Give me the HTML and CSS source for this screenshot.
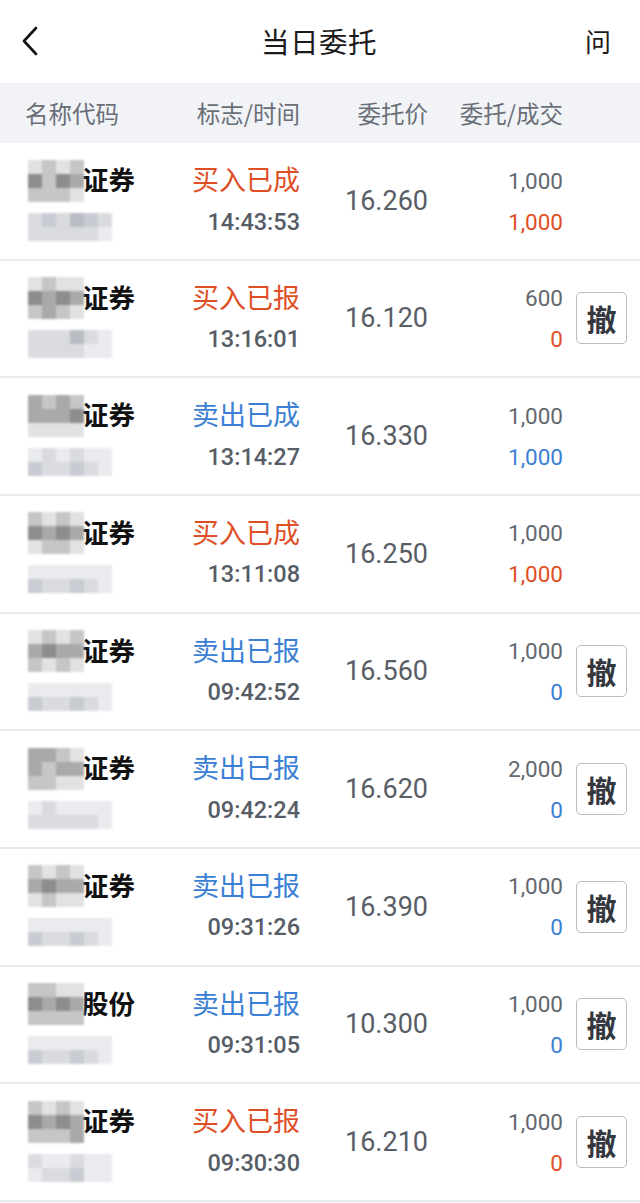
FILE: index.html
```html
<!DOCTYPE html>
<html lang="zh-CN">
<head>
<meta charset="utf-8">
<title>当日委托</title>
<link rel="stylesheet" href="styles.css">
</head>
<body>
<div class="app">
  <header class="topbar">
    <svg class="back" width="20" height="30" viewBox="0 0 20 30"><polyline points="16,2 4,15 16,28" fill="none" stroke="#111" stroke-width="2.6" stroke-linecap="round" stroke-linejoin="round"/></svg>
    <div class="title">当日委托</div>
    <div class="ask">问</div>
  </header>
  <div class="thead">
    <div class="c-name">名称代码</div>
    <div class="c-flag">标志/时间</div>
    <div class="c-price">委托价</div>
    <div class="c-qty">委托/成交</div>
    <div class="c-act"></div>
  </div>

  <div class="row">
    <div class="name"><div class="l1"><div class="mz mn"><i class="c4"></i><i class="c3"></i><i class="c4"></i><i class="c3"></i><i class="c1"></i><i class="c3"></i><i class="c1"></i><i class="c2"></i><i class="c3"></i><i class="c3"></i><i class="c3"></i><i class="c4"></i></div><span class="nm">证券</span></div><div class="l2"><div class="mz mc"><i class="b3"></i><i class="b2"></i><i class="b3"></i><i class="b1"></i><i class="b2"></i><i class="b3"></i><i class="b3"></i><i class="b3"></i><i class="b3"></i><i class="b3"></i><i class="b3"></i><i class="b4"></i></div></div></div>
    <div class="flag"><div class="st buy">买入已成</div><div class="tm">14:43:53</div></div>
    <div class="price">16.260</div>
    <div class="qty"><div>1,000</div><div class="buy">1,000</div></div>
    <div class="act"></div>
  </div>

  <div class="row">
    <div class="name"><div class="l1"><div class="mz mn"><i class="c4"></i><i class="c3"></i><i class="c4"></i><i class="c4"></i><i class="c1"></i><i class="c2"></i><i class="c1"></i><i class="c2"></i><i class="c3"></i><i class="c2"></i><i class="c3"></i><i class="c4"></i></div><span class="nm">证券</span></div><div class="l2"><div class="mz mc"><i class="b3"></i><i class="b3"></i><i class="b3"></i><i class="b1"></i><i class="b3"></i><i class="b4"></i><i class="b3"></i><i class="b3"></i><i class="b3"></i><i class="b3"></i><i class="b4"></i><i class="b4"></i></div></div></div>
    <div class="flag"><div class="st buy">买入已报</div><div class="tm">13:16:01</div></div>
    <div class="price">16.120</div>
    <div class="qty"><div>600</div><div class="buy">0</div></div>
    <div class="act"><button class="cancel">撤</button></div>
  </div>

  <div class="row">
    <div class="name"><div class="l1"><div class="mz mn"><i class="c2"></i><i class="c3"></i><i class="c2"></i><i class="c3"></i><i class="c2"></i><i class="c2"></i><i class="c2"></i><i class="c1"></i><i class="c4"></i><i class="c4"></i><i class="c4"></i><i class="c4"></i></div><span class="nm">证券</span></div><div class="l2"><div class="mz mc"><i class="b4"></i><i class="b3"></i><i class="b4"></i><i class="b3"></i><i class="b4"></i><i class="b4"></i><i class="b2"></i><i class="b3"></i><i class="b3"></i><i class="b2"></i><i class="b3"></i><i class="b4"></i></div></div></div>
    <div class="flag"><div class="st sell">卖出已成</div><div class="tm">13:14:27</div></div>
    <div class="price">16.330</div>
    <div class="qty"><div>1,000</div><div class="sell">1,000</div></div>
    <div class="act"></div>
  </div>

  <div class="row">
    <div class="name"><div class="l1"><div class="mz mn"><i class="c3"></i><i class="c4"></i><i class="c3"></i><i class="c4"></i><i class="c1"></i><i class="c2"></i><i class="c1"></i><i class="c2"></i><i class="c4"></i><i class="c3"></i><i class="c3"></i><i class="c4"></i></div><span class="nm">证券</span></div><div class="l2"><div class="mz mc"><i class="b4"></i><i class="b4"></i><i class="b4"></i><i class="b4"></i><i class="b4"></i><i class="b4"></i><i class="b2"></i><i class="b3"></i><i class="b3"></i><i class="b2"></i><i class="b3"></i><i class="b4"></i></div></div></div>
    <div class="flag"><div class="st buy">买入已成</div><div class="tm">13:11:08</div></div>
    <div class="price">16.250</div>
    <div class="qty"><div>1,000</div><div class="buy">1,000</div></div>
    <div class="act"></div>
  </div>

  <div class="row">
    <div class="name"><div class="l1"><div class="mz mn"><i class="c4"></i><i class="c3"></i><i class="c4"></i><i class="c3"></i><i class="c2"></i><i class="c1"></i><i class="c2"></i><i class="c2"></i><i class="c3"></i><i class="c4"></i><i class="c3"></i><i class="c4"></i></div><span class="nm">证券</span></div><div class="l2"><div class="mz mc"><i class="b4"></i><i class="b4"></i><i class="b4"></i><i class="b4"></i><i class="b4"></i><i class="b4"></i><i class="b2"></i><i class="b3"></i><i class="b3"></i><i class="b2"></i><i class="b3"></i><i class="b4"></i></div></div></div>
    <div class="flag"><div class="st sell">卖出已报</div><div class="tm">09:42:52</div></div>
    <div class="price">16.560</div>
    <div class="qty"><div>1,000</div><div class="sell">0</div></div>
    <div class="act"><button class="cancel">撤</button></div>
  </div>

  <div class="row">
    <div class="name"><div class="l1"><div class="mz mn"><i class="c2"></i><i class="c2"></i><i class="c3"></i><i class="c4"></i><i class="c2"></i><i class="c3"></i><i class="c2"></i><i class="c2"></i><i class="c3"></i><i class="c3"></i><i class="c4"></i><i class="c4"></i></div><span class="nm">证券</span></div><div class="l2"><div class="mz mc"><i class="b4"></i><i class="b3"></i><i class="b4"></i><i class="b4"></i><i class="b4"></i><i class="b4"></i><i class="b3"></i><i class="b3"></i><i class="b3"></i><i class="b3"></i><i class="b3"></i><i class="b4"></i></div></div></div>
    <div class="flag"><div class="st sell">卖出已报</div><div class="tm">09:42:24</div></div>
    <div class="price">16.620</div>
    <div class="qty"><div>2,000</div><div class="sell">0</div></div>
    <div class="act"><button class="cancel">撤</button></div>
  </div>

  <div class="row">
    <div class="name"><div class="l1"><div class="mz mn"><i class="c3"></i><i class="c4"></i><i class="c3"></i><i class="c4"></i><i class="c2"></i><i class="c1"></i><i class="c2"></i><i class="c2"></i><i class="c4"></i><i class="c3"></i><i class="c4"></i><i class="c4"></i></div><span class="nm">证券</span></div><div class="l2"><div class="mz mc"><i class="b4"></i><i class="b4"></i><i class="b4"></i><i class="b4"></i><i class="b4"></i><i class="b4"></i><i class="b2"></i><i class="b3"></i><i class="b3"></i><i class="b2"></i><i class="b3"></i><i class="b4"></i></div></div></div>
    <div class="flag"><div class="st sell">卖出已报</div><div class="tm">09:31:26</div></div>
    <div class="price">16.390</div>
    <div class="qty"><div>1,000</div><div class="sell">0</div></div>
    <div class="act"><button class="cancel">撤</button></div>
  </div>

  <div class="row">
    <div class="name"><div class="l1"><div class="mz mn"><i class="c3"></i><i class="c3"></i><i class="c4"></i><i class="c4"></i><i class="c1"></i><i class="c2"></i><i class="c1"></i><i class="c2"></i><i class="c3"></i><i class="c3"></i><i class="c3"></i><i class="c3"></i></div><span class="nm">股份</span></div><div class="l2"><div class="mz mc"><i class="b4"></i><i class="b4"></i><i class="b4"></i><i class="b4"></i><i class="b4"></i><i class="b4"></i><i class="b2"></i><i class="b3"></i><i class="b3"></i><i class="b2"></i><i class="b3"></i><i class="b4"></i></div></div></div>
    <div class="flag"><div class="st sell">卖出已报</div><div class="tm">09:31:05</div></div>
    <div class="price">10.300</div>
    <div class="qty"><div>1,000</div><div class="sell">0</div></div>
    <div class="act"><button class="cancel">撤</button></div>
  </div>

  <div class="row">
    <div class="name"><div class="l1"><div class="mz mn"><i class="c3"></i><i class="c4"></i><i class="c3"></i><i class="c4"></i><i class="c1"></i><i class="c2"></i><i class="c1"></i><i class="c2"></i><i class="c3"></i><i class="c3"></i><i class="c3"></i><i class="c2"></i></div><span class="nm">证券</span></div><div class="l2"><div class="mz mc"><i class="b3"></i><i class="b4"></i><i class="b4"></i><i class="b3"></i><i class="b4"></i><i class="b4"></i><i class="b4"></i><i class="b3"></i><i class="b3"></i><i class="b2"></i><i class="b4"></i><i class="b4"></i></div></div></div>
    <div class="flag"><div class="st buy">买入已报</div><div class="tm">09:30:30</div></div>
    <div class="price">16.210</div>
    <div class="qty"><div>1,000</div><div class="buy">0</div></div>
    <div class="act"><button class="cancel">撤</button></div>
  </div>
</div>
</body>
</html>
```

FILE: styles.css
```css
* { box-sizing: border-box; }
html, body { margin: 0; padding: 0; background: #fff; }
body {
  font-family: Roboto, "Noto Sans CJK SC", "Noto Sans", sans-serif;
  color: #222;
  width: 640px;
}
.app { width: 640px; overflow: hidden; }

.topbar {
  height: 83px;
  display: grid;
  grid-template-columns: 1fr auto 1fr;
  align-items: center;
  padding: 0 22px 0 20px;
}
.back { display: block; margin-top: -2px; }
.title {
  font-family: "Noto Sans CJK SC", sans-serif;
  font-size: 28.5px;
  color: #1a1a1a;
  letter-spacing: 0.5px;
  margin-top: -2px;
}
.ask {
  justify-self: end;
  font-family: "Noto Sans CJK SC", sans-serif;
  font-size: 26px;
  color: #1a1a1a;
  margin-right: 7px;
  margin-top: -2px;
}

.thead, .row {
  display: grid;
  grid-template-columns: 180px 120px 128px 135px 77px;
}
.thead {
  height: 60px;
  background: #f1f3f7;
  align-items: center;
  font-family: "Noto Sans CJK SC", sans-serif;
  font-size: 23.5px;
  color: #6a6f77;
}
.c-name { padding-left: 25px; }
.c-flag, .c-price, .c-qty { text-align: right; }

.row {
  height: 117.67px;
  border-bottom: 2px solid #e9eaed;
  align-items: center;
}
.name {
  align-self: stretch;
  display: flex;
  flex-direction: column;
  padding-top: 17px;
  padding-left: 28px;
}
.l1, .l2 { height: 41px; display: flex; align-items: center; }
.nm {
  font-family: "Noto Sans CJK SC", sans-serif;
  font-weight: 700;
  font-size: 26.5px;
  color: #111;
  margin-left: -2px;
  margin-top: -4px;
}
.mz { display: grid; filter: blur(0.8px); }
.mn { grid-template-columns: repeat(4, 14px); grid-auto-rows: 14px; }
.mc { grid-template-columns: repeat(6, 14px); grid-auto-rows: 14px; margin-top: 10px; }
.mz i { display: block; }
.c1 { background: #8d8d8d; }
.c2 { background: #a9a9a9; }
.c3 { background: #c6c6c6; }
.c4 { background: #e2e2e2; }
.b1 { background: #b9bcc3; }
.b2 { background: #c8cbd1; }
.b3 { background: #d9dbe0; }
.b4 { background: #eaebee; }

.flag {
  align-self: stretch;
  display: flex;
  flex-direction: column;
  align-items: flex-end;
  padding-top: 17px;
}
.st {
  height: 41px;
  display: flex;
  align-items: center;
  font-family: "Noto Sans CJK SC", sans-serif;
  font-size: 27px;
  margin-top: -2px;
}
.tm {
  height: 41px;
  display: flex;
  align-items: center;
  font-size: 23.5px;
  font-weight: 500;
  color: #575d66;
  margin-top: 2px;
}
.buy { color: #df4f25; }
.sell { color: #3b80d4; }

.price {
  text-align: right;
  font-size: 27px;
  color: #595e66;
}

.qty {
  align-self: stretch;
  display: flex;
  flex-direction: column;
  align-items: flex-end;
  padding-top: 17px;
  font-size: 22.5px;
  color: #63676e;
}
.qty div { height: 41px; display: flex; align-items: center; }

.act { display: flex; justify-content: flex-start; padding-left: 13px; }
.cancel {
  width: 51px;
  height: 52px;
  padding: 0;
  border: 1.5px solid #b9bcc1;
  border-radius: 5px;
  background: #fff;
  font-family: "Noto Sans CJK SC", sans-serif;
  font-weight: 700;
  font-size: 30px;
  line-height: 1;
  color: #34383e;
  display: flex;
  align-items: center;
  justify-content: center;
}
```
